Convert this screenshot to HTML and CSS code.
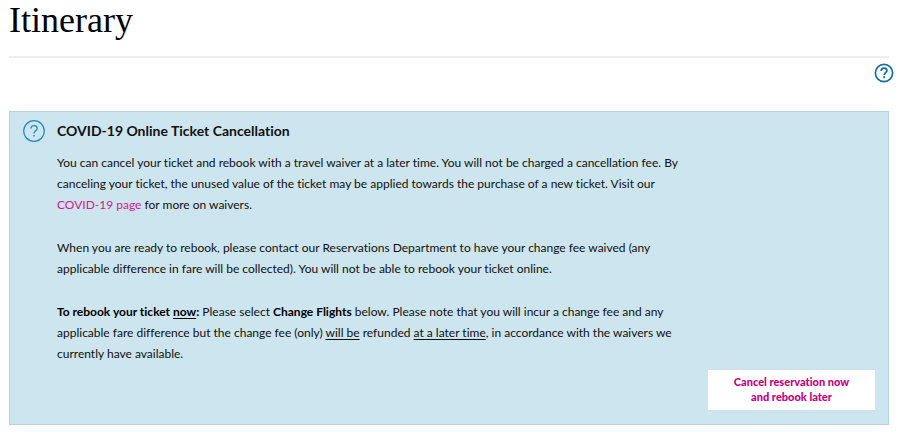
FILE: index.html
```html
<!DOCTYPE html>
<html lang="en">
<head>
    <meta charset="UTF-8">
    <meta name="viewport" content="width=device-width, initial-scale=1.0">
    <title>Itinerary</title>
    <link rel="stylesheet" href="styles.css">
</head>
<body>
    <main class="page">
        <h1 class="page-title">Itinerary</h1>

        <div class="toolbar">
            <button class="help" type="button" aria-label="Help">
                <svg width="20" height="20" viewBox="0 0 20 20" fill="none" stroke="#1470a4">
                    <circle cx="10" cy="10" r="8.6" stroke-width="1.7"/>
                    <path d="M7.2 8C7.2 6.2 8.3 5.2 10 5.2s2.9 1 2.9 2.5c0 2-2.7 2-2.7 4.4" stroke-width="1.8"/>
                    <path d="M10.2 13.2v2" stroke-width="1.9"/>
                </svg>
            </button>
        </div>

        <section class="notice">
            <svg class="notice-icon" width="22" height="22" viewBox="0 0 22 22" fill="none" stroke="#2389bd">
                <circle cx="11" cy="11" r="10.3" stroke-width="1.2"/>
                <path d="M7.9 8.6C7.9 6.8 9.1 5.7 11 5.7s3.2 1 3.2 2.7c0 2.3-3.2 2.4-3.2 5.1" stroke-width="1.2"/>
                <path d="M11 15v1.5" stroke-width="1.5"/>
            </svg>
            <div class="notice-body">
                <h2>COVID-19 Online Ticket Cancellation</h2>
                <p>You can cancel your ticket and rebook with a travel waiver at a later time. You will not be charged a cancellation fee. By canceling your ticket, the unused value of the ticket may be applied towards the purchase of a new ticket. Visit our <a href="#">COVID-19 page</a> for more on waivers.</p>
                <p>When you are ready to rebook, please contact our Reservations Department to have your change fee waived (any applicable difference in fare will be collected). You will not be able to rebook your ticket online.</p>
                <p><strong>To rebook your ticket <u>now</u>:</strong> Please select <strong>Change Flights</strong> below. Please note that you will incur a change fee and any applicable fare difference but the change fee (only) <u>will be</u> refunded <u>at a later time</u>, in accordance with the waivers we currently have available.</p>
            </div>
            <button class="cancel-btn" type="button">Cancel reservation now<br>and rebook later</button>
        </section>
    </main>
</body>
</html>
```
FILE: styles.css
```css
* {
    box-sizing: border-box;
}

body {
    margin: 0;
    background-color: #fff;
    color: #111;
    font-family: Lato, "Noto Sans", sans-serif;
    font-size: 12px;
    font-variant-ligatures: no-common-ligatures;
    line-height: 21px;
}

.page {
    padding: 0 11px 8px 9px;
}

.page-title {
    margin: 0;
    padding-bottom: 16px;
    border-bottom: 2px solid #eee;
    color: #000;
    font-family: "Liberation Serif", serif;
    font-size: 36px;
    font-weight: 400;
    line-height: 40px;
}

.toolbar {
    display: flex;
    justify-content: flex-end;
    margin-right: -5px;
    padding: 5px 0 28px;
}

.help {
    display: block;
    padding: 0;
    border: none;
    background: none;
    cursor: pointer;
}

.help svg {
    display: block;
}

.notice {
    display: grid;
    grid-template-columns: 22px minmax(0, 628px) 1fr;
    column-gap: 12px;
    padding: 8px 13px 14px;
    background-color: #cce5ee;
    border: 1px solid #b5d3dc;
}

.notice-body h2 {
    margin: 0 0 11px;
    font-size: 14px;
    font-weight: 700;
    line-height: 21px;
}

.notice-body p {
    margin: 0 0 22px;
}

.notice-body p:last-child {
    margin-bottom: 0;
}

.notice-body strong {
    color: #000;
}

.notice a {
    color: #d6188a;
    text-decoration: none;
}

.notice u {
    text-underline-offset: 2px;
}

.cancel-btn {
    grid-column: 1 / -1;
    justify-self: end;
    width: 167px;
    margin-top: 6px;
    padding: 4px 8px 6px;
    border: none;
    background-color: #fff;
    color: #c6007e;
    font: inherit;
    font-size: 11px;
    font-weight: 900;
    line-height: 15px;
    cursor: pointer;
}
```
